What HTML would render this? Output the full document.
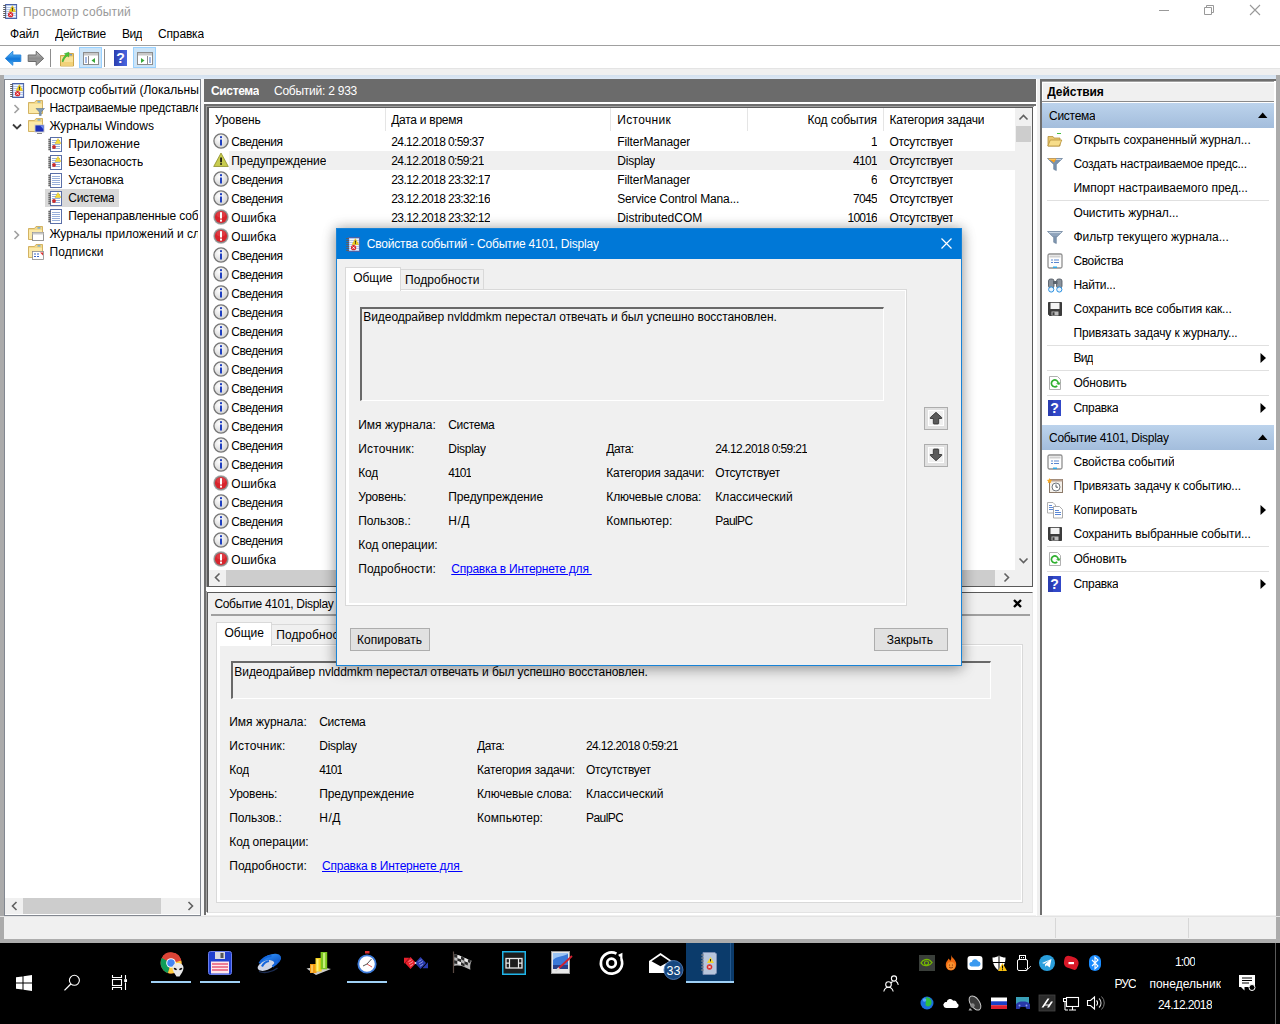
<!DOCTYPE html>
<html lang="ru"><head><meta charset="utf-8"><title>Просмотр событий</title>
<style>
html,body{margin:0;padding:0;}
body{width:1280px;height:1024px;overflow:hidden;background:#fff;font-family:"Liberation Sans",sans-serif;font-size:12px;color:#000;}
#root{position:relative;width:1280px;height:1024px;overflow:hidden;}
.a{position:absolute;box-sizing:border-box;}
.t{white-space:nowrap;overflow:hidden;}
svg{position:absolute;overflow:visible;}

</style></head>
<body>
<div id="root">
<div class="a " style="left:0px;top:0px;width:1280px;height:943px;background:#f0f0f0;"></div>
<div class="a " style="left:0px;top:0px;width:1280px;height:45px;background:#ffffff;"></div>
<div class="a " style="left:0px;top:45px;width:1280px;height:1px;background:#a0a0a0;"></div>
<div class="a " style="left:0px;top:46px;width:1280px;height:22px;background:#ffffff;"></div>
<div class="a " style="left:0px;top:68px;width:1280px;height:1px;background:#e4e4e4;"></div>
<div class="a " style="left:0px;top:75px;width:1280px;height:4px;background:linear-gradient(#d3e0ee,#dde8f5);"></div>
<div class="a " style="left:0px;top:75px;width:4px;height:864px;background:#ababab;"></div>
<div class="a " style="left:1276px;top:75px;width:4px;height:864px;background:#ababab;"></div>
<div class="a " style="left:0px;top:916px;width:1280px;height:1px;background:#e3e3e3;"></div>
<div class="a " style="left:0px;top:939px;width:1280px;height:4px;background:#adadad;"></div>
<svg style="left:3px;top:4px" width="14.0" height="15" viewBox="0 0 14 15"><rect x="2.600" y="0.500" width="11" height="14" fill="#b4c8ea" stroke="#4a62a8" stroke-width="1"/>
<path d="M3.500 2.500h9.200M3.500 4.500h9.200M3.500 6.500h9.200M3.500 8.500h9.200M3.500 10.500h9.200M3.500 12.500h9.200" stroke="#f4f8ff" stroke-width="1"/>
<path d="M0.200 1.500h2.800M0.200 3.500h2.800M0.200 5.500h2.800M0.200 7.500h2.800M0.200 9.500h2.800M0.200 11.500h2.800M0.200 13.500h2.800" stroke="#5e5e5e" stroke-width="1"/>
<path d="M9.400 1.700l3.200 5.800h-6.400z" fill="#f7d417" stroke="#d8b000" stroke-width="0.500"/><rect x="8.900" y="3.600" width="1" height="2.200" fill="#222"/><rect x="8.900" y="6.200" width="1" height="0.900" fill="#222"/>
<circle cx="7.600" cy="10.700" r="2.600" fill="#d9262c"/><path d="M6.500 9.600l2.200 2.200M8.700 9.600l-2.200 2.200" stroke="#fff" stroke-width="0.900"/></svg>
<div class="a t" style="top:4px;height:16px;line-height:16px;left:23px;color:#999999;letter-spacing:0.165px;">Просмотр событий</div>
<svg style="left:1150px;top:0" width="130" height="22"><path d="M9 10.500h10" stroke="#999" stroke-width="1" fill="none"/><path d="M54.500 7.500h7v7h-7z M56.500 7.500v-2h7v7h-2" stroke="#999" stroke-width="1" fill="none"/><path d="M100 5l10 10M110 5l-10 10" stroke="#999" stroke-width="1.100" fill="none"/></svg>
<div class="a t" style="top:26px;height:16px;line-height:16px;left:10px;letter-spacing:-0.129px;">Файл</div>
<div class="a t" style="top:26px;height:16px;line-height:16px;left:55px;letter-spacing:-0.221px;">Действие</div>
<div class="a t" style="top:26px;height:16px;line-height:16px;left:122px;letter-spacing:-0.573px;">Вид</div>
<div class="a t" style="top:26px;height:16px;line-height:16px;left:158px;letter-spacing:-0.154px;">Справка</div>
<svg style="left:4px;top:49px" width="20" height="18"><defs><linearGradient id="gb" x1="0" y1="0" x2="0" y2="1"><stop offset="0" stop-color="#6cc8ff"/><stop offset="0.550" stop-color="#0f74d8"/><stop offset="1" stop-color="#4ab4f8"/></linearGradient></defs><path d="M1.300 9.400l7.500-7.200v3.800h8v6.500h-8v3.800z" fill="url(#gb)" stroke="#2a86dc" stroke-width="1"/></svg>
<svg style="left:27px;top:49px" width="20" height="18"><defs><linearGradient id="gg" x1="0" y1="0" x2="0" y2="1"><stop offset="0" stop-color="#c8c8c8"/><stop offset="0.5" stop-color="#8c8c8c"/><stop offset="1" stop-color="#a8a8a8"/></linearGradient></defs><path d="M16.700 9.400l-7.500-7.200v3.800h-8v6.500h8v3.800z" fill="url(#gg)" stroke="#6a6a6a" stroke-width="1"/></svg>
<div class="a " style="left:50px;top:49px;width:1px;height:18px;background:#8d8d8d;"></div>
<svg style="left:59px;top:50px" width="16" height="17"><path d="M1.500 5.500h7l1-2h5v12.500h-13z" fill="#e8c468" stroke="#c9a040" stroke-width="0.900"/><path d="M2 6.500h12v9h-12z" fill="#f8e29a"/><path d="M2 12h12v3.500h-12z" fill="#f2d27a"/><rect x="10.500" y="4.200" width="2.500" height="1.200" fill="#4a90e0"/><path d="M3 11.500c0.500-3 2-5 4-6.500l-1.600-1.200 4.600-1.600-0.300 4.800-1.500-1.100c-1.800 1.300-3.200 3-4 5.800z" fill="#48c838" stroke="#2c9a22" stroke-width="0.500"/></svg>
<div class="a " style="left:79px;top:47px;width:23px;height:21px;background:#cce4f7;border:1px solid #99d1ff;"></div>
<svg style="left:83px;top:52px" width="16" height="13"><rect x="0.5" y="0.5" width="15" height="12" fill="#fff" stroke="#8c8c8c"/><rect x="1" y="1" width="14" height="2.5" fill="#c8c8c8"/><path d="M5.5 4v8" stroke="#8c8c8c"/><path d="M2 6h2M2 8h2M2 10h2" stroke="#4a74c8" stroke-width="1"/><path d="M12 6v5l-3.5-2.5z" fill="#38a838"/></svg>
<div class="a " style="left:104px;top:49px;width:1px;height:18px;background:#8d8d8d;"></div>
<svg style="left:114px;top:50px" width="13" height="16"><defs><linearGradient id="gh" x1="0" y1="0" x2="1" y2="0"><stop offset="0" stop-color="#2a3fb0"/><stop offset="1" stop-color="#4a66e0"/></linearGradient></defs><rect x="0" y="0" width="13" height="16" fill="url(#gh)"/><text x="6.5" y="13" font-size="14" font-weight="bold" fill="#fff" text-anchor="middle" font-family="Liberation Sans, sans-serif">?</text></svg>
<div class="a " style="left:133px;top:47px;width:23px;height:21px;background:#cce4f7;border:1px solid #99d1ff;"></div>
<svg style="left:137px;top:52px" width="16" height="13"><rect x="0.5" y="0.5" width="15" height="12" fill="#fff" stroke="#8c8c8c"/><rect x="1" y="1" width="14" height="2.5" fill="#c8c8c8"/><path d="M10.5 4v8" stroke="#8c8c8c"/><path d="M12 6h2M12 8h2M12 10h2" stroke="#4a74c8" stroke-width="1"/><path d="M4 6v5l3.5-2.5z" fill="#38a838"/></svg>
<div class="a " style="left:4px;top:79px;width:197px;height:837px;background:#ffffff;border:1px solid #828790;"></div>
<svg style="left:10px;top:83px" width="14.0" height="15" viewBox="0 0 14 15"><rect x="2.600" y="0.500" width="11" height="14" fill="#b4c8ea" stroke="#4a62a8" stroke-width="1"/>
<path d="M3.500 2.500h9.200M3.500 4.500h9.200M3.500 6.500h9.200M3.500 8.500h9.200M3.500 10.500h9.200M3.500 12.500h9.200" stroke="#f4f8ff" stroke-width="1"/>
<path d="M0.200 1.500h2.800M0.200 3.500h2.800M0.200 5.500h2.800M0.200 7.500h2.800M0.200 9.500h2.800M0.200 11.500h2.800M0.200 13.500h2.800" stroke="#5e5e5e" stroke-width="1"/>
<path d="M9.400 1.700l3.200 5.800h-6.400z" fill="#f7d417" stroke="#d8b000" stroke-width="0.500"/><rect x="8.900" y="3.600" width="1" height="2.200" fill="#222"/><rect x="8.900" y="6.200" width="1" height="0.900" fill="#222"/>
<circle cx="7.600" cy="10.700" r="2.600" fill="#d9262c"/><path d="M6.500 9.600l2.200 2.200M8.700 9.600l-2.200 2.200" stroke="#fff" stroke-width="0.900"/></svg>
<div class="a t" style="top:82px;height:16px;line-height:16px;left:30.5px;width:168px;letter-spacing:0.016px;">Просмотр событий (Локальный</div>
<svg style="left:13px;top:104px" width="8" height="10"><path d="M1.5 1l4 4-4 4" stroke="#a0a0a0" stroke-width="1.6" fill="none"/></svg>
<svg style="left:28px;top:100px" width="17" height="16"><path d="M0.5 2.5h6l1.5-2h6.5v13h-14z" fill="#f3d98a" stroke="#c9a54a" stroke-width="0.8"/>
<path d="M1 4h13v9h-13z" fill="#fbe9a8"/><rect x="9.5" y="1.3" width="3" height="1.2" fill="#5aa0e0"/><path d="M8 8.5h8.5l-3.3 3.5v3.5h-1.8v-3.5z" fill="#7d97b5" stroke="#4f6a88" stroke-width="0.5"/></svg>
<div class="a t" style="top:100px;height:16px;line-height:16px;left:49.4px;width:149px;letter-spacing:-0.243px;">Настраиваемые представления</div>
<svg style="left:12px;top:123px" width="10" height="8"><path d="M1 1.5l4 4 4-4" stroke="#3c3c3c" stroke-width="1.8" fill="none"/></svg>
<svg style="left:28px;top:118px" width="17" height="17"><path d="M0.5 2.5h6l1.5-2h6.5v13h-14z" fill="#f3d98a" stroke="#c9a54a" stroke-width="0.8"/>
<path d="M1 4h13v9h-13z" fill="#fbe9a8"/><rect x="9.5" y="1.3" width="3" height="1.2" fill="#5aa0e0"/><rect x="7" y="7" width="9" height="7" fill="#1c2fb8" stroke="#c8c8c8" stroke-width="0.9"/><path d="M12 7.5h3.6v4z" fill="#6f8cf0"/><path d="M9 15.5h5" stroke="#888" stroke-width="1"/></svg>
<div class="a t" style="top:118px;height:16px;line-height:16px;left:49.4px;letter-spacing:0.011px;">Журналы Windows</div>
<svg style="left:48px;top:137px" width="14" height="15"><rect x="2.5" y="0.5" width="11" height="14" fill="#ffffff" stroke="#5a6fa8"/>
<path d="M4 3.5h8M4 5.5h8M4 7.5h8M4 9.5h8M4 11.5h8" stroke="#7d9ad0" stroke-width="0.8"/>
<path d="M1.200 1.500v12" stroke="#9a9a9a" stroke-width="1.400"/><path d="M0.500 2.500h2.500M0.500 4.500h2.500M0.500 6.500h2.500M0.500 8.500h2.500M0.500 10.500h2.500M0.500 12.500h2.500" stroke="#666" stroke-width="1"/><path d="M10 1.5l3 5h-6z" fill="#f4dc3a" stroke="#d0a800" stroke-width="0.4"/><circle cx="6" cy="10" r="1.9" fill="#cc2b2b"/></svg>
<div class="a t" style="top:136px;height:16px;line-height:16px;left:68.3px;letter-spacing:0.131px;">Приложение</div>
<svg style="left:48px;top:155px" width="14" height="15"><rect x="2.5" y="0.5" width="11" height="14" fill="#ffffff" stroke="#5a6fa8"/>
<path d="M4 3.5h8M4 5.5h8M4 7.5h8M4 9.5h8M4 11.5h8" stroke="#7d9ad0" stroke-width="0.8"/>
<path d="M1.200 1.500v12" stroke="#9a9a9a" stroke-width="1.400"/><path d="M0.500 2.500h2.500M0.500 4.500h2.500M0.500 6.500h2.500M0.500 8.500h2.500M0.500 10.500h2.500M0.500 12.500h2.500" stroke="#666" stroke-width="1"/><path d="M10 1.5l3 5h-6z" fill="#f4dc3a" stroke="#d0a800" stroke-width="0.4"/><circle cx="6" cy="10" r="1.9" fill="#cc2b2b"/></svg>
<div class="a t" style="top:154px;height:16px;line-height:16px;left:68.3px;letter-spacing:-0.154px;">Безопасность</div>
<svg style="left:48px;top:173px" width="14" height="15"><rect x="2.5" y="0.5" width="11" height="14" fill="#ffffff" stroke="#5a6fa8"/>
<path d="M4 3.5h8M4 5.5h8M4 7.5h8M4 9.5h8M4 11.5h8" stroke="#7d9ad0" stroke-width="0.8"/>
<path d="M1.200 1.500v12" stroke="#9a9a9a" stroke-width="1.400"/><path d="M0.500 2.500h2.500M0.500 4.500h2.500M0.500 6.500h2.500M0.500 8.500h2.500M0.500 10.500h2.500M0.500 12.500h2.500" stroke="#666" stroke-width="1"/></svg>
<div class="a t" style="top:172px;height:16px;line-height:16px;left:68.3px;letter-spacing:-0.158px;">Установка</div>
<div class="a " style="left:45px;top:189px;width:74px;height:18px;background:#d9d9d9;"></div>
<svg style="left:48px;top:191px" width="14" height="15"><rect x="2.5" y="0.5" width="11" height="14" fill="#ffffff" stroke="#5a6fa8"/>
<path d="M4 3.5h8M4 5.5h8M4 7.5h8M4 9.5h8M4 11.5h8" stroke="#7d9ad0" stroke-width="0.8"/>
<path d="M1.200 1.500v12" stroke="#9a9a9a" stroke-width="1.400"/><path d="M0.500 2.500h2.500M0.500 4.500h2.500M0.500 6.500h2.500M0.500 8.500h2.500M0.500 10.500h2.500M0.500 12.500h2.500" stroke="#666" stroke-width="1"/><path d="M10 1.5l3 5h-6z" fill="#f4dc3a" stroke="#d0a800" stroke-width="0.4"/><circle cx="6" cy="10" r="1.9" fill="#cc2b2b"/></svg>
<div class="a t" style="top:190px;height:16px;line-height:16px;left:68.3px;letter-spacing:-0.318px;">Система</div>
<svg style="left:48px;top:209px" width="14" height="15"><rect x="2.5" y="0.5" width="11" height="14" fill="#ffffff" stroke="#5a6fa8"/>
<path d="M4 3.5h8M4 5.5h8M4 7.5h8M4 9.5h8M4 11.5h8" stroke="#7d9ad0" stroke-width="0.8"/>
<path d="M1.200 1.500v12" stroke="#9a9a9a" stroke-width="1.400"/><path d="M0.500 2.500h2.500M0.500 4.500h2.500M0.500 6.500h2.500M0.500 8.500h2.500M0.500 10.500h2.500M0.500 12.500h2.500" stroke="#666" stroke-width="1"/></svg>
<div class="a t" style="top:208px;height:16px;line-height:16px;left:68.3px;width:130px;letter-spacing:-0.147px;">Перенаправленные события</div>
<svg style="left:13px;top:230px" width="8" height="10"><path d="M1.5 1l4 4-4 4" stroke="#a0a0a0" stroke-width="1.6" fill="none"/></svg>
<svg style="left:28px;top:226px" width="17" height="16"><path d="M0.5 2.5h6l1.5-2h6.5v13h-14z" fill="#f3d98a" stroke="#c9a54a" stroke-width="0.8"/>
<path d="M1 4h13v9h-13z" fill="#fbe9a8"/><rect x="9.5" y="1.3" width="3" height="1.2" fill="#5aa0e0"/><rect x="4.5" y="6.5" width="11" height="8" fill="#fff" stroke="#8a8a8a" stroke-width="0.9"/><rect x="4.5" y="6.5" width="11" height="2" fill="#c8c8c8"/></svg>
<div class="a t" style="top:226px;height:16px;line-height:16px;left:49.4px;width:149px;letter-spacing:0.013px;">Журналы приложений и служб</div>
<svg style="left:28px;top:244px" width="17" height="16"><path d="M0.5 2.5h6l1.5-2h6.5v13h-14z" fill="#f3d98a" stroke="#c9a54a" stroke-width="0.8"/>
<path d="M1 4h13v9h-13z" fill="#fbe9a8"/><rect x="9.5" y="1.3" width="3" height="1.2" fill="#5aa0e0"/><rect x="4.5" y="7.5" width="11" height="8" fill="#fff" stroke="#8a8a8a" stroke-width="0.8"/><path d="M6 10h2M9 10h2M6 12.5h2M9 12.5h2" stroke="#3a66c8" stroke-width="1.2"/><path d="M12 8.5h3v3z" fill="#e03030"/></svg>
<div class="a t" style="top:244px;height:16px;line-height:16px;left:49.4px;letter-spacing:0.125px;">Подписки</div>
<div class="a " style="left:5px;top:898px;width:195px;height:16px;background:#f0f0f0;"></div>
<div class="a " style="left:23px;top:898px;width:138px;height:16px;background:#cdcdcd;"></div>
<svg style="left:5px;top:898px" width="195" height="16"><path d="M11.500 4l-4 4 4 4" stroke="#606060" stroke-width="1.600" fill="none"/><path d="M183.500 4l4 4-4 4" stroke="#606060" stroke-width="1.600" fill="none"/></svg>
<div class="a " style="left:201px;top:79px;width:3px;height:837px;background:#f7f7f7;"></div>
<div class="a " style="left:204px;top:79px;width:832px;height:23px;background:#6b6b6b;"></div>
<div class="a " style="left:204px;top:102px;width:832px;height:2px;background:#ffffff;"></div>
<div class="a t" style="top:83px;height:16px;line-height:16px;left:211px;color:#fff;font-weight:bold;letter-spacing:-0.359px;">Система</div>
<div class="a t" style="top:83px;height:16px;line-height:16px;left:274px;color:#fff;letter-spacing:-0.246px;">Событий: 2 933</div>
<div class="a " style="left:204px;top:104px;width:832px;height:811px;background:#ffffff;border-left:2px solid #6e6e6e;border-top:2px solid #6e6e6e;"></div>
<div class="a " style="left:206px;top:106px;width:828px;height:1px;background:#a0a0a0;"></div>
<div class="a " style="left:206px;top:106px;width:1px;height:806px;background:#a0a0a0;"></div>
<div class="a " style="left:206px;top:587px;width:830px;height:4px;background:#ffffff;"></div>
<div class="a " style="left:207px;top:107px;width:826px;height:480px;background:#ffffff;border:1px solid #5a5a5a;border-left-width:2px;"></div>
<div class="a t" style="top:112px;height:16px;line-height:16px;left:215px;letter-spacing:-0.069px;">Уровень</div>
<div class="a t" style="top:112px;height:16px;line-height:16px;left:391.25px;letter-spacing:-0.264px;">Дата и время</div>
<div class="a t" style="top:112px;height:16px;line-height:16px;left:617.2px;letter-spacing:0.346px;">Источник</div>
<div class="a t" style="top:112px;height:16px;line-height:16px;left:807.4px;letter-spacing:-0.105px;">Код события</div>
<div class="a t" style="top:112px;height:16px;line-height:16px;left:889.4px;letter-spacing:-0.193px;">Категория задачи</div>
<div class="a " style="left:385px;top:108px;width:1px;height:23px;background:#e5e5e5;"></div>
<div class="a " style="left:610px;top:108px;width:1px;height:23px;background:#e5e5e5;"></div>
<div class="a " style="left:747px;top:108px;width:1px;height:23px;background:#e5e5e5;"></div>
<div class="a " style="left:883px;top:108px;width:1px;height:23px;background:#e5e5e5;"></div>
<div class="a " style="left:229px;top:151px;width:786px;height:19px;background:#f0f0f0;"></div>
<svg style="left:213px;top:133px" width="16" height="16"><defs><radialGradient id="gi" cx="0.4" cy="0.35" r="0.7"><stop offset="0" stop-color="#fff"/><stop offset="1" stop-color="#d0d0d0"/></radialGradient></defs><circle cx="8" cy="8" r="7.100" fill="url(#gi)" stroke="#767676" stroke-width="1.300"/><rect x="7" y="6.5" width="2" height="6" fill="#2040c0"/><rect x="7" y="3.2" width="2" height="2" fill="#2040c0"/></svg>
<div class="a t" style="top:134px;height:16px;line-height:16px;left:231.25px;letter-spacing:-0.447px;">Сведения</div>
<div class="a t" style="top:134px;height:16px;line-height:16px;left:391.25px;letter-spacing:-0.608px;">24.12.2018 0:59:37</div>
<div class="a t" style="top:134px;height:16px;line-height:16px;left:617.2px;letter-spacing:-0.079px;">FilterManager</div>
<div class="a t" style="top:134px;height:16px;line-height:16px;left:871px;letter-spacing:-0.688px;">1</div>
<div class="a t" style="top:134px;height:16px;line-height:16px;left:889.4px;letter-spacing:-0.301px;">Отсутствует</div>
<svg style="left:213px;top:152px" width="16" height="16"><path d="M8 1l7.3 13.5h-14.6z" fill="#c0c040" stroke="#8f9030" stroke-width="0.8"/><path d="M8 2.5l6 11.3h-12z" fill="#c8cc50"/><rect x="7.2" y="5.5" width="1.7" height="4.8" fill="#111"/><rect x="7.2" y="11.2" width="1.7" height="1.6" fill="#111"/></svg>
<div class="a t" style="top:153px;height:16px;line-height:16px;left:231.25px;letter-spacing:-0.081px;">Предупреждение</div>
<div class="a t" style="top:153px;height:16px;line-height:16px;left:391.25px;letter-spacing:-0.608px;">24.12.2018 0:59:21</div>
<div class="a t" style="top:153px;height:16px;line-height:16px;left:617.2px;letter-spacing:-0.194px;">Display</div>
<div class="a t" style="top:153px;height:16px;line-height:16px;left:853px;letter-spacing:-0.676px;">4101</div>
<div class="a t" style="top:153px;height:16px;line-height:16px;left:889.4px;letter-spacing:-0.301px;">Отсутствует</div>
<svg style="left:213px;top:171px" width="16" height="16"><defs><radialGradient id="gi" cx="0.4" cy="0.35" r="0.7"><stop offset="0" stop-color="#fff"/><stop offset="1" stop-color="#d0d0d0"/></radialGradient></defs><circle cx="8" cy="8" r="7.100" fill="url(#gi)" stroke="#767676" stroke-width="1.300"/><rect x="7" y="6.5" width="2" height="6" fill="#2040c0"/><rect x="7" y="3.2" width="2" height="2" fill="#2040c0"/></svg>
<div class="a t" style="top:172px;height:16px;line-height:16px;left:231.25px;letter-spacing:-0.447px;">Сведения</div>
<div class="a t" style="top:172px;height:16px;line-height:16px;left:391.25px;letter-spacing:-0.598px;">23.12.2018 23:32:17</div>
<div class="a t" style="top:172px;height:16px;line-height:16px;left:617.2px;letter-spacing:-0.079px;">FilterManager</div>
<div class="a t" style="top:172px;height:16px;line-height:16px;left:871px;letter-spacing:-0.688px;">6</div>
<div class="a t" style="top:172px;height:16px;line-height:16px;left:889.4px;letter-spacing:-0.301px;">Отсутствует</div>
<svg style="left:213px;top:190px" width="16" height="16"><defs><radialGradient id="gi" cx="0.4" cy="0.35" r="0.7"><stop offset="0" stop-color="#fff"/><stop offset="1" stop-color="#d0d0d0"/></radialGradient></defs><circle cx="8" cy="8" r="7.100" fill="url(#gi)" stroke="#767676" stroke-width="1.300"/><rect x="7" y="6.5" width="2" height="6" fill="#2040c0"/><rect x="7" y="3.2" width="2" height="2" fill="#2040c0"/></svg>
<div class="a t" style="top:191px;height:16px;line-height:16px;left:231.25px;letter-spacing:-0.447px;">Сведения</div>
<div class="a t" style="top:191px;height:16px;line-height:16px;left:391.25px;letter-spacing:-0.598px;">23.12.2018 23:32:16</div>
<div class="a t" style="top:191px;height:16px;line-height:16px;left:617.2px;letter-spacing:-0.147px;">Service Control Mana...</div>
<div class="a t" style="top:191px;height:16px;line-height:16px;left:853px;letter-spacing:-0.676px;">7045</div>
<div class="a t" style="top:191px;height:16px;line-height:16px;left:889.4px;letter-spacing:-0.301px;">Отсутствует</div>
<svg style="left:213px;top:209px" width="16" height="16"><circle cx="8" cy="8" r="7.700" fill="#a8a8a8"/><circle cx="8" cy="8" r="7" fill="#8a8a8a"/><circle cx="8" cy="8" r="6.100" fill="#d8242c"/><ellipse cx="8" cy="5.500" rx="4.500" ry="3" fill="#e85058" opacity="0.500"/><rect x="7" y="3.2" width="2" height="6.3" fill="#fff"/><rect x="7" y="10.6" width="2" height="2" fill="#fff"/></svg>
<div class="a t" style="top:210px;height:16px;line-height:16px;left:231.25px;letter-spacing:0.044px;">Ошибка</div>
<div class="a t" style="top:210px;height:16px;line-height:16px;left:391.25px;letter-spacing:-0.598px;">23.12.2018 23:32:12</div>
<div class="a t" style="top:210px;height:16px;line-height:16px;left:617.2px;letter-spacing:-0.026px;">DistributedCOM</div>
<div class="a t" style="top:210px;height:16px;line-height:16px;left:847.5px;letter-spacing:-0.775px;">10016</div>
<div class="a t" style="top:210px;height:16px;line-height:16px;left:889.4px;letter-spacing:-0.301px;">Отсутствует</div>
<svg style="left:213px;top:228px" width="16" height="16"><circle cx="8" cy="8" r="7.700" fill="#a8a8a8"/><circle cx="8" cy="8" r="7" fill="#8a8a8a"/><circle cx="8" cy="8" r="6.100" fill="#d8242c"/><ellipse cx="8" cy="5.500" rx="4.500" ry="3" fill="#e85058" opacity="0.500"/><rect x="7" y="3.2" width="2" height="6.3" fill="#fff"/><rect x="7" y="10.6" width="2" height="2" fill="#fff"/></svg>
<div class="a t" style="top:229px;height:16px;line-height:16px;left:231.25px;letter-spacing:0.044px;">Ошибка</div>
<svg style="left:213px;top:247px" width="16" height="16"><defs><radialGradient id="gi" cx="0.4" cy="0.35" r="0.7"><stop offset="0" stop-color="#fff"/><stop offset="1" stop-color="#d0d0d0"/></radialGradient></defs><circle cx="8" cy="8" r="7.100" fill="url(#gi)" stroke="#767676" stroke-width="1.300"/><rect x="7" y="6.5" width="2" height="6" fill="#2040c0"/><rect x="7" y="3.2" width="2" height="2" fill="#2040c0"/></svg>
<div class="a t" style="top:248px;height:16px;line-height:16px;left:231.25px;letter-spacing:-0.447px;">Сведения</div>
<svg style="left:213px;top:266px" width="16" height="16"><defs><radialGradient id="gi" cx="0.4" cy="0.35" r="0.7"><stop offset="0" stop-color="#fff"/><stop offset="1" stop-color="#d0d0d0"/></radialGradient></defs><circle cx="8" cy="8" r="7.100" fill="url(#gi)" stroke="#767676" stroke-width="1.300"/><rect x="7" y="6.5" width="2" height="6" fill="#2040c0"/><rect x="7" y="3.2" width="2" height="2" fill="#2040c0"/></svg>
<div class="a t" style="top:267px;height:16px;line-height:16px;left:231.25px;letter-spacing:-0.447px;">Сведения</div>
<svg style="left:213px;top:285px" width="16" height="16"><defs><radialGradient id="gi" cx="0.4" cy="0.35" r="0.7"><stop offset="0" stop-color="#fff"/><stop offset="1" stop-color="#d0d0d0"/></radialGradient></defs><circle cx="8" cy="8" r="7.100" fill="url(#gi)" stroke="#767676" stroke-width="1.300"/><rect x="7" y="6.5" width="2" height="6" fill="#2040c0"/><rect x="7" y="3.2" width="2" height="2" fill="#2040c0"/></svg>
<div class="a t" style="top:286px;height:16px;line-height:16px;left:231.25px;letter-spacing:-0.447px;">Сведения</div>
<svg style="left:213px;top:304px" width="16" height="16"><defs><radialGradient id="gi" cx="0.4" cy="0.35" r="0.7"><stop offset="0" stop-color="#fff"/><stop offset="1" stop-color="#d0d0d0"/></radialGradient></defs><circle cx="8" cy="8" r="7.100" fill="url(#gi)" stroke="#767676" stroke-width="1.300"/><rect x="7" y="6.5" width="2" height="6" fill="#2040c0"/><rect x="7" y="3.2" width="2" height="2" fill="#2040c0"/></svg>
<div class="a t" style="top:305px;height:16px;line-height:16px;left:231.25px;letter-spacing:-0.447px;">Сведения</div>
<svg style="left:213px;top:323px" width="16" height="16"><defs><radialGradient id="gi" cx="0.4" cy="0.35" r="0.7"><stop offset="0" stop-color="#fff"/><stop offset="1" stop-color="#d0d0d0"/></radialGradient></defs><circle cx="8" cy="8" r="7.100" fill="url(#gi)" stroke="#767676" stroke-width="1.300"/><rect x="7" y="6.5" width="2" height="6" fill="#2040c0"/><rect x="7" y="3.2" width="2" height="2" fill="#2040c0"/></svg>
<div class="a t" style="top:324px;height:16px;line-height:16px;left:231.25px;letter-spacing:-0.447px;">Сведения</div>
<svg style="left:213px;top:342px" width="16" height="16"><defs><radialGradient id="gi" cx="0.4" cy="0.35" r="0.7"><stop offset="0" stop-color="#fff"/><stop offset="1" stop-color="#d0d0d0"/></radialGradient></defs><circle cx="8" cy="8" r="7.100" fill="url(#gi)" stroke="#767676" stroke-width="1.300"/><rect x="7" y="6.5" width="2" height="6" fill="#2040c0"/><rect x="7" y="3.2" width="2" height="2" fill="#2040c0"/></svg>
<div class="a t" style="top:343px;height:16px;line-height:16px;left:231.25px;letter-spacing:-0.447px;">Сведения</div>
<svg style="left:213px;top:361px" width="16" height="16"><defs><radialGradient id="gi" cx="0.4" cy="0.35" r="0.7"><stop offset="0" stop-color="#fff"/><stop offset="1" stop-color="#d0d0d0"/></radialGradient></defs><circle cx="8" cy="8" r="7.100" fill="url(#gi)" stroke="#767676" stroke-width="1.300"/><rect x="7" y="6.5" width="2" height="6" fill="#2040c0"/><rect x="7" y="3.2" width="2" height="2" fill="#2040c0"/></svg>
<div class="a t" style="top:362px;height:16px;line-height:16px;left:231.25px;letter-spacing:-0.447px;">Сведения</div>
<svg style="left:213px;top:380px" width="16" height="16"><defs><radialGradient id="gi" cx="0.4" cy="0.35" r="0.7"><stop offset="0" stop-color="#fff"/><stop offset="1" stop-color="#d0d0d0"/></radialGradient></defs><circle cx="8" cy="8" r="7.100" fill="url(#gi)" stroke="#767676" stroke-width="1.300"/><rect x="7" y="6.5" width="2" height="6" fill="#2040c0"/><rect x="7" y="3.2" width="2" height="2" fill="#2040c0"/></svg>
<div class="a t" style="top:381px;height:16px;line-height:16px;left:231.25px;letter-spacing:-0.447px;">Сведения</div>
<svg style="left:213px;top:399px" width="16" height="16"><defs><radialGradient id="gi" cx="0.4" cy="0.35" r="0.7"><stop offset="0" stop-color="#fff"/><stop offset="1" stop-color="#d0d0d0"/></radialGradient></defs><circle cx="8" cy="8" r="7.100" fill="url(#gi)" stroke="#767676" stroke-width="1.300"/><rect x="7" y="6.5" width="2" height="6" fill="#2040c0"/><rect x="7" y="3.2" width="2" height="2" fill="#2040c0"/></svg>
<div class="a t" style="top:400px;height:16px;line-height:16px;left:231.25px;letter-spacing:-0.447px;">Сведения</div>
<svg style="left:213px;top:418px" width="16" height="16"><defs><radialGradient id="gi" cx="0.4" cy="0.35" r="0.7"><stop offset="0" stop-color="#fff"/><stop offset="1" stop-color="#d0d0d0"/></radialGradient></defs><circle cx="8" cy="8" r="7.100" fill="url(#gi)" stroke="#767676" stroke-width="1.300"/><rect x="7" y="6.5" width="2" height="6" fill="#2040c0"/><rect x="7" y="3.2" width="2" height="2" fill="#2040c0"/></svg>
<div class="a t" style="top:419px;height:16px;line-height:16px;left:231.25px;letter-spacing:-0.447px;">Сведения</div>
<svg style="left:213px;top:437px" width="16" height="16"><defs><radialGradient id="gi" cx="0.4" cy="0.35" r="0.7"><stop offset="0" stop-color="#fff"/><stop offset="1" stop-color="#d0d0d0"/></radialGradient></defs><circle cx="8" cy="8" r="7.100" fill="url(#gi)" stroke="#767676" stroke-width="1.300"/><rect x="7" y="6.5" width="2" height="6" fill="#2040c0"/><rect x="7" y="3.2" width="2" height="2" fill="#2040c0"/></svg>
<div class="a t" style="top:438px;height:16px;line-height:16px;left:231.25px;letter-spacing:-0.447px;">Сведения</div>
<svg style="left:213px;top:456px" width="16" height="16"><defs><radialGradient id="gi" cx="0.4" cy="0.35" r="0.7"><stop offset="0" stop-color="#fff"/><stop offset="1" stop-color="#d0d0d0"/></radialGradient></defs><circle cx="8" cy="8" r="7.100" fill="url(#gi)" stroke="#767676" stroke-width="1.300"/><rect x="7" y="6.5" width="2" height="6" fill="#2040c0"/><rect x="7" y="3.2" width="2" height="2" fill="#2040c0"/></svg>
<div class="a t" style="top:457px;height:16px;line-height:16px;left:231.25px;letter-spacing:-0.447px;">Сведения</div>
<svg style="left:213px;top:475px" width="16" height="16"><circle cx="8" cy="8" r="7.700" fill="#a8a8a8"/><circle cx="8" cy="8" r="7" fill="#8a8a8a"/><circle cx="8" cy="8" r="6.100" fill="#d8242c"/><ellipse cx="8" cy="5.500" rx="4.500" ry="3" fill="#e85058" opacity="0.500"/><rect x="7" y="3.2" width="2" height="6.3" fill="#fff"/><rect x="7" y="10.6" width="2" height="2" fill="#fff"/></svg>
<div class="a t" style="top:476px;height:16px;line-height:16px;left:231.25px;letter-spacing:0.044px;">Ошибка</div>
<svg style="left:213px;top:494px" width="16" height="16"><defs><radialGradient id="gi" cx="0.4" cy="0.35" r="0.7"><stop offset="0" stop-color="#fff"/><stop offset="1" stop-color="#d0d0d0"/></radialGradient></defs><circle cx="8" cy="8" r="7.100" fill="url(#gi)" stroke="#767676" stroke-width="1.300"/><rect x="7" y="6.5" width="2" height="6" fill="#2040c0"/><rect x="7" y="3.2" width="2" height="2" fill="#2040c0"/></svg>
<div class="a t" style="top:495px;height:16px;line-height:16px;left:231.25px;letter-spacing:-0.447px;">Сведения</div>
<svg style="left:213px;top:513px" width="16" height="16"><defs><radialGradient id="gi" cx="0.4" cy="0.35" r="0.7"><stop offset="0" stop-color="#fff"/><stop offset="1" stop-color="#d0d0d0"/></radialGradient></defs><circle cx="8" cy="8" r="7.100" fill="url(#gi)" stroke="#767676" stroke-width="1.300"/><rect x="7" y="6.5" width="2" height="6" fill="#2040c0"/><rect x="7" y="3.2" width="2" height="2" fill="#2040c0"/></svg>
<div class="a t" style="top:514px;height:16px;line-height:16px;left:231.25px;letter-spacing:-0.447px;">Сведения</div>
<svg style="left:213px;top:532px" width="16" height="16"><defs><radialGradient id="gi" cx="0.4" cy="0.35" r="0.7"><stop offset="0" stop-color="#fff"/><stop offset="1" stop-color="#d0d0d0"/></radialGradient></defs><circle cx="8" cy="8" r="7.100" fill="url(#gi)" stroke="#767676" stroke-width="1.300"/><rect x="7" y="6.5" width="2" height="6" fill="#2040c0"/><rect x="7" y="3.2" width="2" height="2" fill="#2040c0"/></svg>
<div class="a t" style="top:533px;height:16px;line-height:16px;left:231.25px;letter-spacing:-0.447px;">Сведения</div>
<svg style="left:213px;top:551px" width="16" height="16"><circle cx="8" cy="8" r="7.700" fill="#a8a8a8"/><circle cx="8" cy="8" r="7" fill="#8a8a8a"/><circle cx="8" cy="8" r="6.100" fill="#d8242c"/><ellipse cx="8" cy="5.500" rx="4.500" ry="3" fill="#e85058" opacity="0.500"/><rect x="7" y="3.2" width="2" height="6.3" fill="#fff"/><rect x="7" y="10.6" width="2" height="2" fill="#fff"/></svg>
<div class="a t" style="top:552px;height:16px;line-height:16px;left:231.25px;letter-spacing:0.044px;">Ошибка</div>
<div class="a " style="left:1015px;top:108px;width:17px;height:462px;background:#f0f0f0;"></div>
<div class="a " style="left:1016px;top:126px;width:15px;height:16px;background:#cdcdcd;"></div>
<svg style="left:1015px;top:108px" width="17" height="462"><path d="M4.5 11.5l4-4 4 4" stroke="#606060" stroke-width="1.6" fill="none"/><path d="M4.5 450.5l4 4 4-4" stroke="#606060" stroke-width="1.6" fill="none"/></svg>
<div class="a " style="left:209px;top:570px;width:806px;height:16px;background:#f0f0f0;"></div>
<div class="a " style="left:226px;top:570px;width:769px;height:16px;background:#cdcdcd;"></div>
<svg style="left:209px;top:570px" width="806" height="16"><path d="M10.5 3.5l-4 4 4 4" stroke="#606060" stroke-width="1.6" fill="none"/><path d="M795.5 3.5l4 4-4 4" stroke="#606060" stroke-width="1.6" fill="none"/></svg>
<div class="a " style="left:1015px;top:570px;width:17px;height:16px;background:#f0f0f0;"></div>
<div class="a " style="left:207px;top:592px;width:826px;height:321px;background:#f0f0f0;border-left:1px solid #5a5a5a;border-top:1px solid #5a5a5a;border-right:1px solid #e8e8e8;border-bottom:1px solid #e3e3e3;"></div>
<div class="a t" style="top:596px;height:16px;line-height:16px;left:214.4px;letter-spacing:-0.317px;">Событие 4101, Display</div>
<div class="a " style="left:211px;top:614px;width:819px;height:2px;background:#a0a0a0;"></div>
<svg style="left:1012.5px;top:598.5px" width="9" height="9"><path d="M1 1l7 7M8 1l-7 7" stroke="#000" stroke-width="2.300" fill="none"/></svg>
<div class="a " style="left:216px;top:644px;width:807px;height:259px;background:#ffffff;border:1px solid #d9d9d9;"></div>
<div class="a " style="left:220px;top:646px;width:801px;height:254px;background:#f0f0f0;"></div>
<div class="a " style="left:271px;top:624px;width:84px;height:20px;background:#f0f0f0;border:1px solid #d9d9d9;border-bottom:none;"></div>
<div class="a " style="left:216px;top:622px;width:56px;height:24px;background:#ffffff;border:1px solid #d9d9d9;border-bottom:none;"></div>
<div class="a t" style="top:625px;height:16px;line-height:16px;left:224.4px;letter-spacing:0.026px;">Общие</div>
<div class="a t" style="top:627px;height:16px;line-height:16px;left:276.3px;letter-spacing:0.085px;">Подробности</div>
<div class="a " style="left:231px;top:661px;width:760px;height:38px;background:#f0f0f0;border:1px solid #fff;border-top:2px solid #696969;border-left:2px solid #696969;"></div>
<div class="a t" style="top:664px;height:16px;line-height:16px;left:234.3px;letter-spacing:-0.052px;">Видеодрайвер nvlddmkm перестал отвечать и был успешно восстановлен.</div>
<div class="a t" style="top:714px;height:16px;line-height:16px;left:229.25px;letter-spacing:-0.018px;">Имя журнала:</div>
<div class="a t" style="top:714px;height:16px;line-height:16px;left:319.25px;letter-spacing:-0.297px;">Система</div>
<div class="a t" style="top:738px;height:16px;line-height:16px;left:229.25px;letter-spacing:0.188px;">Источник:</div>
<div class="a t" style="top:738px;height:16px;line-height:16px;left:319.25px;letter-spacing:-0.266px;">Display</div>
<div class="a t" style="top:762px;height:16px;line-height:16px;left:229.25px;letter-spacing:-0.219px;">Код</div>
<div class="a t" style="top:762px;height:16px;line-height:16px;left:319.25px;letter-spacing:-0.926px;">4101</div>
<div class="a t" style="top:786px;height:16px;line-height:16px;left:229.25px;letter-spacing:-0.195px;">Уровень:</div>
<div class="a t" style="top:786px;height:16px;line-height:16px;left:319.25px;letter-spacing:-0.099px;">Предупреждение</div>
<div class="a t" style="top:810px;height:16px;line-height:16px;left:229.25px;letter-spacing:-0.097px;">Пользов.:</div>
<div class="a t" style="top:810px;height:16px;line-height:16px;left:319.25px;letter-spacing:0.536px;">Н/Д</div>
<div class="a t" style="top:834px;height:16px;line-height:16px;left:229.25px;letter-spacing:-0.100px;">Код операции:</div>
<div class="a t" style="top:858px;height:16px;line-height:16px;left:229.25px;letter-spacing:0.034px;">Подробности:</div>
<div class="a t" style="top:738px;height:16px;line-height:16px;left:477px;letter-spacing:-0.501px;">Дата:</div>
<div class="a t" style="top:738px;height:16px;line-height:16px;left:586px;letter-spacing:-0.635px;">24.12.2018 0:59:21</div>
<div class="a t" style="top:762px;height:16px;line-height:16px;left:477px;letter-spacing:-0.195px;">Категория задачи:</div>
<div class="a t" style="top:762px;height:16px;line-height:16px;left:586px;letter-spacing:-0.237px;">Отсутствует</div>
<div class="a t" style="top:786px;height:16px;line-height:16px;left:477px;letter-spacing:-0.116px;">Ключевые слова:</div>
<div class="a t" style="top:786px;height:16px;line-height:16px;left:586px;letter-spacing:0.046px;">Классический</div>
<div class="a t" style="top:810px;height:16px;line-height:16px;left:477px;letter-spacing:0.055px;">Компьютер:</div>
<div class="a t" style="top:810px;height:16px;line-height:16px;left:586px;letter-spacing:-0.548px;">PaulPC</div>
<div class="a t" style="top:858px;height:16px;line-height:16px;left:322px;color:#0000ff;letter-spacing:-0.237px;text-decoration:underline;white-space:pre;">Справка в Интернете для </div>
<div class="a " style="left:1036px;top:79px;width:1px;height:837px;background:#ffffff;"></div>
<div class="a " style="left:1040px;top:79px;width:236px;height:836px;background:#ffffff;border-left:2px solid #6e6e6e;border-top:2px solid #6e6e6e;"></div>
<div class="a " style="left:1042px;top:81px;width:232px;height:1px;background:#a0a0a0;"></div>
<div class="a " style="left:1043px;top:83px;width:231px;height:18px;background:#f0f0f0;"></div>
<div class="a " style="left:1042px;top:101px;width:232px;height:1px;background:#8a8a8a;"></div>
<div class="a t" style="top:84px;height:16px;line-height:16px;left:1047.2px;font-weight:bold;letter-spacing:-0.058px;">Действия</div>
<div class="a " style="left:1042px;top:103px;width:232px;height:25px;background:linear-gradient(#bcd3ec,#a3bddc);"></div>
<div class="a t" style="top:108px;height:16px;line-height:16px;left:1049px;letter-spacing:-0.275px;">Система</div>
<svg style="left:1258px;top:112px" width="10" height="6"><path d="M0 6h9.4l-4.700-5.500z" fill="#000"/></svg>
<div class="a t" style="top:132px;height:16px;line-height:16px;left:1073.4px;letter-spacing:-0.049px;">Открыть сохраненный журнал...</div>
<svg style="left:1047px;top:132px" width="16" height="16"><path d="M1 4.5h5l1 1.5h6v8h-12z" fill="#e8c770" stroke="#b8923a" stroke-width="0.8"/><path d="M0.8 14l2.5-6h11.5l-2.5 6z" fill="#f7dd8a" stroke="#b8923a" stroke-width="0.8"/><path d="M10 1.5h4" stroke="#40c040" stroke-width="1"/></svg>
<div class="a t" style="top:156px;height:16px;line-height:16px;left:1073.4px;letter-spacing:-0.250px;">Создать настраиваемое предс...</div>
<svg style="left:1047px;top:156px" width="16" height="16"><path d="M0.500 2.500h15l-6.200 6v6l-2.600-1.200v-4.800z" fill="#7b93ae" stroke="#5a7391" stroke-width="0.600"/><path d="M1.500 3h13l-1 1h-11z" fill="#c3d0df"/><path d="M1 2.500h8.500l-2.500 4.200-1.500-1.200z" fill="#f9a11b"/><path d="M1.500 3h7l-0.500 1h-5.500z" fill="#fcc35a"/></svg>
<div class="a t" style="top:180px;height:16px;line-height:16px;left:1073.4px;letter-spacing:-0.033px;">Импорт настраиваемого пред...</div>
<div class="a " style="left:1047px;top:200px;width:222px;height:1px;background:#e0e0e0;"></div>
<div class="a t" style="top:205px;height:16px;line-height:16px;left:1073.4px;letter-spacing:-0.088px;">Очистить журнал...</div>
<div class="a t" style="top:229px;height:16px;line-height:16px;left:1073.4px;letter-spacing:0.005px;">Фильтр текущего журнала...</div>
<svg style="left:1047px;top:229px" width="16" height="16"><path d="M0.500 2.500h15l-6.200 6v6l-2.600-1.200v-4.800z" fill="#8197b1" stroke="#5a7391" stroke-width="0.600"/><path d="M1.500 3h13l-1.200 1.200h-10.600z" fill="#c9d6e4"/><path d="M4 5.500h8l-1 1h-6z" fill="#9fb2c8"/></svg>
<div class="a t" style="top:253px;height:16px;line-height:16px;left:1073.4px;letter-spacing:-0.338px;">Свойства</div>
<svg style="left:1047px;top:253px" width="16" height="16"><rect x="1" y="1" width="14" height="14" rx="1.500" fill="#fdfdfd" stroke="#909090" stroke-width="1.300"/><rect x="2.500" y="2.500" width="11" height="2" fill="#d0d0d0"/><path d="M4 7h2M7 7h5M4 9.5h2M7 9.5h5" stroke="#5a86d0" stroke-width="1"/><rect x="6" y="13.5" width="4" height="1.5" fill="#30a8e8"/></svg>
<div class="a t" style="top:277px;height:16px;line-height:16px;left:1073.4px;letter-spacing:-0.269px;">Найти...</div>
<svg style="left:1047px;top:277px" width="17" height="16"><rect x="1.5" y="2" width="5.5" height="9" rx="2" fill="#8a929c" stroke="#4a525c" stroke-width="0.8"/><rect x="9.5" y="2" width="5.5" height="9" rx="2" fill="#8a929c" stroke="#4a525c" stroke-width="0.8"/><rect x="6" y="4" width="4.5" height="3" fill="#5a626c"/><circle cx="4.2" cy="12.5" r="2.6" fill="#e8f4ff" stroke="#2a90e0" stroke-width="1"/><circle cx="12.3" cy="12.5" r="2.6" fill="#e8f4ff" stroke="#2a90e0" stroke-width="1"/></svg>
<div class="a t" style="top:301px;height:16px;line-height:16px;left:1073.4px;letter-spacing:-0.171px;">Сохранить все события как...</div>
<svg style="left:1047px;top:301px" width="16" height="16"><path d="M1.5 1.5h13v13h-12l-1-1z" fill="#3c3c3c" stroke="#222" stroke-width="0.8"/><rect x="3.5" y="1.8" width="9" height="6.2" fill="#f4f4f4"/><rect x="4.5" y="10.5" width="7" height="4" fill="#bdbdbd"/><rect x="5.5" y="11.3" width="2" height="2.7" fill="#3c3c3c"/></svg>
<div class="a t" style="top:325px;height:16px;line-height:16px;left:1073.4px;letter-spacing:-0.107px;">Привязать задачу к журналу...</div>
<div class="a " style="left:1047px;top:345px;width:222px;height:1px;background:#e0e0e0;"></div>
<div class="a t" style="top:350px;height:16px;line-height:16px;left:1073.4px;letter-spacing:-0.740px;">Вид</div>
<svg style="left:1260px;top:353px" width="7" height="10"><path d="M0.5 0l5.5 5-5.5 5z" fill="#000"/></svg>
<div class="a " style="left:1047px;top:370px;width:222px;height:1px;background:#e0e0e0;"></div>
<div class="a t" style="top:375px;height:16px;line-height:16px;left:1073.4px;letter-spacing:-0.130px;">Обновить</div>
<svg style="left:1047px;top:375px" width="16" height="16"><path d="M2.5 1.5h8l3 3v10h-11z" fill="#fff" stroke="#a8a8a8" stroke-width="0.9"/><path d="M11.2 8.2a3.4 3.4 0 1 0 -1 2.6" fill="none" stroke="#30b030" stroke-width="1.7"/><path d="M9 9.5h3.6v-3z" fill="#30b030" transform="rotate(20 11 9)"/></svg>
<div class="a " style="left:1047px;top:395px;width:222px;height:1px;background:#e0e0e0;"></div>
<div class="a t" style="top:400px;height:16px;line-height:16px;left:1073.4px;letter-spacing:-0.283px;">Справка</div>
<svg style="left:1048px;top:400px" width="13" height="16"><rect x="0" y="0" width="13" height="16" fill="#3148c8"/><rect x="0" y="0" width="5" height="16" fill="#2a3cb0"/><text x="6.5" y="13" font-size="14" font-weight="bold" fill="#fff" text-anchor="middle" font-family="Liberation Sans, sans-serif">?</text></svg>
<svg style="left:1260px;top:403px" width="7" height="10"><path d="M0.5 0l5.5 5-5.5 5z" fill="#000"/></svg>
<div class="a " style="left:1042px;top:425px;width:232px;height:25px;background:linear-gradient(#bcd3ec,#a3bddc);"></div>
<div class="a t" style="top:430px;height:16px;line-height:16px;left:1049px;letter-spacing:-0.289px;">Событие 4101, Display</div>
<svg style="left:1258px;top:434px" width="10" height="6"><path d="M0 6h9.4l-4.700-5.500z" fill="#000"/></svg>
<div class="a t" style="top:454px;height:16px;line-height:16px;left:1073.4px;letter-spacing:-0.134px;">Свойства событий</div>
<svg style="left:1047px;top:454px" width="16" height="16"><rect x="1" y="1" width="14" height="14" rx="1.500" fill="#fdfdfd" stroke="#909090" stroke-width="1.300"/><rect x="2.500" y="2.500" width="11" height="2" fill="#d0d0d0"/><path d="M4 7h2M7 7h5M4 9.5h2M7 9.5h5" stroke="#5a86d0" stroke-width="1"/><rect x="6" y="13.5" width="4" height="1.5" fill="#30a8e8"/></svg>
<div class="a t" style="top:478px;height:16px;line-height:16px;left:1073.4px;letter-spacing:-0.117px;">Привязать задачу к событию...</div>
<svg style="left:1047px;top:478px" width="17" height="16"><rect x="2.5" y="1.5" width="13" height="13" fill="#f4f0ea" stroke="#8c7a6a"/><rect x="2.5" y="1.5" width="13" height="2" fill="#b8a090"/><circle cx="9" cy="9" r="4" fill="#fff" stroke="#606870" stroke-width="0.9"/><path d="M9 6.5v2.7h2" stroke="#404850" stroke-width="0.9" fill="none"/><path d="M2.5 0l0.8 1.8 1.9 0.2-1.4 1.3 0.4 1.9-1.7-1-1.7 1 0.4-1.9-1.4-1.3 1.9-0.2z" fill="#f8a820"/></svg>
<div class="a t" style="top:502px;height:16px;line-height:16px;left:1073.4px;letter-spacing:-0.062px;">Копировать</div>
<svg style="left:1047px;top:502px" width="17" height="17"><path d="M0.500 0.500h5.500l2.500 2.500v8h-8z" fill="#fff" stroke="#a8a8a8" stroke-width="0.900"/><path d="M2 3.500h3M2 5.500h5M2 7.500h5" stroke="#4a7ad0" stroke-width="0.900"/><path d="M6.500 4.500h6l3 3v8.500h-9z" fill="#fff" stroke="#a0a0a0" stroke-width="0.900"/><path d="M8 8.500h4M8 10.500h6M8 12.500h6" stroke="#4a7ad0" stroke-width="0.900"/></svg>
<svg style="left:1260px;top:505px" width="7" height="10"><path d="M0.5 0l5.5 5-5.5 5z" fill="#000"/></svg>
<div class="a t" style="top:526px;height:16px;line-height:16px;left:1073.4px;letter-spacing:-0.114px;">Сохранить выбранные событи...</div>
<svg style="left:1047px;top:526px" width="16" height="16"><path d="M1.5 1.5h13v13h-12l-1-1z" fill="#3c3c3c" stroke="#222" stroke-width="0.8"/><rect x="3.5" y="1.8" width="9" height="6.2" fill="#f4f4f4"/><rect x="4.5" y="10.5" width="7" height="4" fill="#bdbdbd"/><rect x="5.5" y="11.3" width="2" height="2.7" fill="#3c3c3c"/></svg>
<div class="a " style="left:1047px;top:546px;width:222px;height:1px;background:#e0e0e0;"></div>
<div class="a t" style="top:551px;height:16px;line-height:16px;left:1073.4px;letter-spacing:-0.130px;">Обновить</div>
<svg style="left:1047px;top:551px" width="16" height="16"><path d="M2.5 1.5h8l3 3v10h-11z" fill="#fff" stroke="#a8a8a8" stroke-width="0.9"/><path d="M11.2 8.2a3.4 3.4 0 1 0 -1 2.6" fill="none" stroke="#30b030" stroke-width="1.7"/><path d="M9 9.5h3.6v-3z" fill="#30b030" transform="rotate(20 11 9)"/></svg>
<div class="a " style="left:1047px;top:571px;width:222px;height:1px;background:#e0e0e0;"></div>
<div class="a t" style="top:576px;height:16px;line-height:16px;left:1073.4px;letter-spacing:-0.283px;">Справка</div>
<svg style="left:1048px;top:576px" width="13" height="16"><rect x="0" y="0" width="13" height="16" fill="#3148c8"/><rect x="0" y="0" width="5" height="16" fill="#2a3cb0"/><text x="6.5" y="13" font-size="14" font-weight="bold" fill="#fff" text-anchor="middle" font-family="Liberation Sans, sans-serif">?</text></svg>
<svg style="left:1260px;top:579px" width="7" height="10"><path d="M0.5 0l5.5 5-5.5 5z" fill="#000"/></svg>
<div class="a " style="left:1055px;top:918px;width:1px;height:20px;background:#d7d7d7;"></div>
<div class="a " style="left:1188px;top:918px;width:1px;height:20px;background:#d7d7d7;"></div>
<div class="a " style="left:336px;top:228px;width:626px;height:438px;background:#f0f0f0;border:1px solid #1883d7;box-shadow:0 0 12px rgba(0,0,0,0.28),0 4px 14px rgba(0,0,0,0.22);"></div>
<div class="a " style="left:337px;top:229px;width:624px;height:30px;background:#0078d7;"></div>
<svg style="left:346px;top:236.5px" width="14.0" height="15" viewBox="0 0 14 15"><rect x="2.600" y="0.500" width="11" height="14" fill="#b4c8ea" stroke="#4a62a8" stroke-width="1"/>
<path d="M3.500 2.500h9.200M3.500 4.500h9.200M3.500 6.500h9.200M3.500 8.500h9.200M3.500 10.500h9.200M3.500 12.500h9.200" stroke="#f4f8ff" stroke-width="1"/>
<path d="M0.200 1.500h2.800M0.200 3.500h2.800M0.200 5.500h2.800M0.200 7.500h2.800M0.200 9.500h2.800M0.200 11.500h2.800M0.200 13.500h2.800" stroke="#5e5e5e" stroke-width="1"/>
<path d="M9.400 1.700l3.200 5.800h-6.400z" fill="#f7d417" stroke="#d8b000" stroke-width="0.500"/><rect x="8.900" y="3.600" width="1" height="2.200" fill="#222"/><rect x="8.900" y="6.200" width="1" height="0.900" fill="#222"/>
<circle cx="7.600" cy="10.700" r="2.600" fill="#d9262c"/><path d="M6.500 9.600l2.200 2.200M8.700 9.600l-2.200 2.200" stroke="#fff" stroke-width="0.900"/></svg>
<div class="a t" style="top:236px;height:16px;line-height:16px;left:366.75px;color:#fff;letter-spacing:-0.191px;">Свойства событий - Событие 4101, Display</div>
<svg style="left:941px;top:238px" width="11" height="11"><path d="M0.5 0.5l10 10M10.5 0.5l-10 10" stroke="#fff" stroke-width="1.2" fill="none"/></svg>
<div class="a " style="left:345px;top:289px;width:562px;height:317px;background:#ffffff;border:1px solid #d9d9d9;"></div>
<div class="a " style="left:349px;top:291px;width:556px;height:312px;background:#f0f0f0;"></div>
<div class="a " style="left:400px;top:269px;width:84px;height:20px;background:#f0f0f0;border:1px solid #d9d9d9;border-bottom:none;"></div>
<div class="a " style="left:345px;top:267px;width:56px;height:24px;background:#ffffff;border:1px solid #d9d9d9;border-bottom:none;"></div>
<div class="a t" style="top:270px;height:16px;line-height:16px;left:353.25px;letter-spacing:-0.044px;">Общие</div>
<div class="a t" style="top:272px;height:16px;line-height:16px;left:405px;letter-spacing:0.067px;">Подробности</div>
<div class="a " style="left:360px;top:307px;width:524px;height:94px;background:#f0f0f0;border:1px solid #fff;border-top:2px solid #696969;border-left:2px solid #696969;"></div>
<div class="a t" style="top:309px;height:16px;line-height:16px;left:363.25px;letter-spacing:-0.052px;">Видеодрайвер nvlddmkm перестал отвечать и был успешно восстановлен.</div>
<div class="a t" style="top:417px;height:16px;line-height:16px;left:358.25px;letter-spacing:-0.018px;">Имя журнала:</div>
<div class="a t" style="top:417px;height:16px;line-height:16px;left:448.25px;letter-spacing:-0.297px;">Система</div>
<div class="a t" style="top:441px;height:16px;line-height:16px;left:358.25px;letter-spacing:0.188px;">Источник:</div>
<div class="a t" style="top:441px;height:16px;line-height:16px;left:448.25px;letter-spacing:-0.266px;">Display</div>
<div class="a t" style="top:465px;height:16px;line-height:16px;left:358.25px;letter-spacing:-0.219px;">Код</div>
<div class="a t" style="top:465px;height:16px;line-height:16px;left:448.25px;letter-spacing:-0.926px;">4101</div>
<div class="a t" style="top:489px;height:16px;line-height:16px;left:358.25px;letter-spacing:-0.195px;">Уровень:</div>
<div class="a t" style="top:489px;height:16px;line-height:16px;left:448.25px;letter-spacing:-0.099px;">Предупреждение</div>
<div class="a t" style="top:513px;height:16px;line-height:16px;left:358.25px;letter-spacing:-0.097px;">Пользов.:</div>
<div class="a t" style="top:513px;height:16px;line-height:16px;left:448.25px;letter-spacing:0.536px;">Н/Д</div>
<div class="a t" style="top:537px;height:16px;line-height:16px;left:358.25px;letter-spacing:-0.100px;">Код операции:</div>
<div class="a t" style="top:561px;height:16px;line-height:16px;left:358.25px;letter-spacing:0.034px;">Подробности:</div>
<div class="a t" style="top:441px;height:16px;line-height:16px;left:606.3px;letter-spacing:-0.501px;">Дата:</div>
<div class="a t" style="top:441px;height:16px;line-height:16px;left:715.3px;letter-spacing:-0.635px;">24.12.2018 0:59:21</div>
<div class="a t" style="top:465px;height:16px;line-height:16px;left:606.3px;letter-spacing:-0.195px;">Категория задачи:</div>
<div class="a t" style="top:465px;height:16px;line-height:16px;left:715.3px;letter-spacing:-0.237px;">Отсутствует</div>
<div class="a t" style="top:489px;height:16px;line-height:16px;left:606.3px;letter-spacing:-0.116px;">Ключевые слова:</div>
<div class="a t" style="top:489px;height:16px;line-height:16px;left:715.3px;letter-spacing:0.046px;">Классический</div>
<div class="a t" style="top:513px;height:16px;line-height:16px;left:606.3px;letter-spacing:0.055px;">Компьютер:</div>
<div class="a t" style="top:513px;height:16px;line-height:16px;left:715.3px;letter-spacing:-0.548px;">PaulPC</div>
<div class="a t" style="top:561px;height:16px;line-height:16px;left:451.25px;color:#0000ff;letter-spacing:-0.237px;text-decoration:underline;white-space:pre;">Справка в Интернете для </div>
<div class="a " style="left:924px;top:407px;width:24px;height:23px;background:#e1e1e1;border:1px solid #adadad;"></div>
<div class="a " style="left:928px;top:410px;width:16px;height:16px;background:#f0f0f0;border:1px solid #fff;"></div>
<svg style="left:929px;top:411px" width="14" height="14"><path d="M7 1.300l5.700 5.200v1h-3v4.800q0 0.700-0.700 0.700h-4q-0.700 0-0.700-0.700v-4.800h-3v-1z" fill="#5a5a5a" stroke="#2a2a2a" stroke-width="0.800"/></svg>
<div class="a " style="left:924px;top:444px;width:24px;height:23px;background:#e1e1e1;border:1px solid #adadad;"></div>
<div class="a " style="left:928px;top:447px;width:16px;height:16px;background:#f0f0f0;border:1px solid #fff;"></div>
<svg style="left:929px;top:448px" width="14" height="14"><path d="M7 12.700l5.700-5.200v-1h-3v-4.800q0-0.700-0.700-0.700h-4q-0.700 0-0.700 0.700v4.800h-3v1z" fill="#5a5a5a" stroke="#2a2a2a" stroke-width="0.800"/></svg>
<div class="a " style="left:350px;top:628px;width:80px;height:23px;background:#e1e1e1;border:1px solid #adadad;"></div>
<div class="a t" style="top:632px;height:16px;line-height:16px;left:357px;letter-spacing:0.037px;">Копировать</div>
<div class="a " style="left:874px;top:628px;width:74px;height:23px;background:#e1e1e1;border:1px solid #adadad;"></div>
<div class="a t" style="top:632px;height:16px;line-height:16px;left:886.8px;letter-spacing:0.012px;">Закрыть</div>
<div class="a " style="left:0px;top:940px;width:1280px;height:3px;background:#adadad;"></div>
<div class="a " style="left:0px;top:943px;width:1280px;height:81px;background:#000000;"></div>
<svg style="left:16px;top:975px" width="16" height="16"><path d="M0 2.3l6.5-0.9v6.1h-6.5z M7.5 1.3l8.5-1.3v7.5h-8.5z M0 8.5h6.5v6.1l-6.5-0.9z M7.5 8.5h8.5v7.5l-8.5-1.3z" fill="#fff"/></svg>
<svg style="left:63px;top:973px" width="20" height="20"><circle cx="11.4" cy="7.3" r="5" fill="none" stroke="#fff" stroke-width="1.1"/><path d="M7.8 11l-6.3 6.4" stroke="#fff" stroke-width="1.3"/></svg>
<svg style="left:111px;top:974px" width="18" height="18"><path d="M1.5 1v2.5h9v-2.5M1.5 16v-2.5h9v2.5" stroke="#fff" stroke-width="1.1" fill="none"/><rect x="1.5" y="5.5" width="9" height="6" fill="none" stroke="#fff" stroke-width="1.1"/><path d="M14.5 1v4M14.5 8.5v7.5" stroke="#fff" stroke-width="1.1"/><rect x="13.2" y="5.2" width="2.8" height="2.8" fill="#fff"/></svg>
<div class="a " style="left:151px;top:981px;width:40px;height:2px;background:#9fd0f5;"></div>
<div class="a " style="left:200px;top:981px;width:40px;height:2px;background:#9fd0f5;"></div>
<div class="a " style="left:347px;top:981px;width:40px;height:2px;background:#9fd0f5;"></div>
<svg style="left:159.5px;top:952px" width="26" height="26"><circle cx="11" cy="11" r="10.5" fill="#db4437"/><path d="M11 11L1.9 5.8A10.5 10.5 0 0 0 8 21z" fill="#0f9d58"/><path d="M11 11l-3 10A10.5 10.5 0 0 0 21.3 8.5z" fill="#ffcd40"/><path d="M11 11L21.3 8.5A10.5 10.5 0 0 0 1.9 5.8z" fill="#db4437"/><circle cx="11" cy="11" r="4.8" fill="#fff"/><circle cx="11" cy="11" r="3.8" fill="#4285f4"/><path d="M18 11c3.5 0 5.5 2.2 5.5 5 0 3-2.5 6-4 8.5h-3c-1.5-2.5-4-5.5-4-8.5 0-2.8 2-5 5.500-5z" fill="#e8e8e8"/><ellipse cx="15.300" cy="17" rx="1.700" ry="1" fill="#111" transform="rotate(30 15.300 17)"/><ellipse cx="20.700" cy="17" rx="1.700" ry="1" fill="#111" transform="rotate(-30 20.700 17)"/></svg>
<svg style="left:208px;top:951px" width="24" height="24"><rect x="0.500" y="0.500" width="23" height="23" rx="2" fill="#1f3fd0" stroke="#6a7de8"/><rect x="7" y="1" width="10" height="7" fill="#d8d8e0"/><rect x="12.500" y="2" width="3" height="5" fill="#555"/><rect x="3" y="10.500" width="18" height="12" fill="#ffe8ec"/><path d="M4 13h16M4 16h16M4 19h16" stroke="#e85a78" stroke-width="1.600"/></svg>
<svg style="left:256px;top:951px" width="27" height="26"><defs><linearGradient id="gsw" x1="0" y1="0" x2="0" y2="1"><stop offset="0" stop-color="#2a8af4"/><stop offset="1" stop-color="#0c4fc0"/></linearGradient></defs><ellipse cx="14.500" cy="10" rx="11.300" ry="6.300" fill="url(#gsw)" transform="rotate(-24 14.500 10)"/><ellipse cx="10" cy="14.500" rx="8.800" ry="4.600" fill="#cfd6e6" transform="rotate(-22 10 14.500)"/><path d="M3.500 12.500c2.500-4.500 7-7.500 12-7.500M6 15.500c1.500-3 4-5 7-5.500M16.500 15.500c2-1.500 4-3.500 5-6" stroke="#1566dc" stroke-width="2.200" fill="none"/><path d="M3 20.500c5 2 13 1 18.500-3.500" stroke="#1b2c52" stroke-width="1.300" fill="none"/></svg>
<svg style="left:306px;top:950px" width="26" height="26"><path d="M0.500 18.500l12-2 12.500 2.500-15 6z" fill="#cdcdcd"/><rect x="4" y="14" width="6.500" height="9" fill="#f39a14"/><rect x="5" y="15" width="2" height="7.500" fill="#fbc45a"/><rect x="9.500" y="8" width="6.200" height="13.500" fill="#f6d21e"/><rect x="10.500" y="9" width="2" height="12" fill="#fdf07a"/><rect x="14.600" y="2" width="6.600" height="17.300" fill="#7cc520"/><rect x="17" y="3" width="2.200" height="15" fill="#c4ee7a"/></svg>
<svg style="left:356px;top:951px" width="22" height="24"><rect x="9" y="0" width="4.500" height="2.500" fill="#d83030"/><circle cx="11" cy="13" r="8.700" fill="#fff" stroke="#3c7ad8" stroke-width="1.800"/><path d="M11 13l4.500-5M11 13l-4 2" stroke="#555" stroke-width="1"/><path d="M11 13l5 3" stroke="#d83030" stroke-width="0.800"/></svg>
<svg style="left:404px;top:956px" width="25" height="14"><path d="M6.500 1l5.500 6-5.500 6-5.500-6z" fill="#e8202c"/><path d="M0 1.800h5.500l-5.500 6z" fill="#e8202c"/><path d="M16.500 1l5.500 6-5.500 6-5.500-6z" fill="#2a3cb0"/><path d="M24 12.200h-5.500l5.500-6z" fill="#2a3cb0"/><path d="M4.500 5.500l3-1.800M5 8l4-2.500M6 10.200l3-1.800" stroke="#f6a0a6" stroke-width="0.900"/><path d="M14.500 5.500l3-1.800M15 8l4-2.500M16 10.200l3-1.800" stroke="#9aa4e4" stroke-width="0.900"/><circle cx="11.500" cy="7" r="0.900" fill="#ddd"/></svg>
<svg style="left:452px;top:951px" width="22" height="24"><path d="M1.500 0.500v21.500" stroke="#5a4a44" stroke-width="1.200"/><path d="M2.200 3c5 1 10 3.500 13 5l4.500 1.800c-1.500 2.500-1.800 5.500-1.300 9l-5-2.300c-3-1.500-7-2.500-11.200-1.500z" fill="#b9b9b9"/><path d="M2.200 3l3.300 1v3l-3.300-0.800zM5.500 7l3.500 1.300v3l-3.500-1.200zM9 5.300l3.500 1.600v3l-3.500-1.600zM12.500 9.900l3.500 1.600-0.300 3-3.200-1.600zM2.200 9.200l3.300 0.800v3l-3.300-0.500zM9 11.300l3.500 1.600v2.600l-3.500-1.600zM15.800 8.200l3.200 1.400-1 2.500-2.200-1z" fill="#2a2a2a"/><path d="M5.500 4l3.500 1.300v2.700l-3.500-1zM12.500 6.900l3.300 1.300v3.300l-3.300-1.600zM5.500 10.100l3.500 1.200v2.500l-3.500-0.800z" fill="#ececec"/></svg>
<svg style="left:502px;top:951px" width="24" height="24"><rect x="0.750" y="0.750" width="22.500" height="22.500" fill="#1c1c1c" stroke="#1fb4e8" stroke-width="1.500"/><rect x="4" y="7.500" width="16" height="9.500" fill="none" stroke="#e8e8e8" stroke-width="1.300"/><path d="M7.500 7.500v9.500M16.500 7.500v9.500M4 12.200h3.500M16.500 12.200h3.500" stroke="#e8e8e8" stroke-width="1.200"/></svg>
<svg style="left:551px;top:951px" width="22" height="24"><rect x="0.500" y="0.500" width="18" height="22" fill="#e8e8e8" stroke="#9a9a9a"/><rect x="2" y="2" width="15" height="12" fill="#3a78d8"/><path d="M2 9c4-4 8-3 15-6v-1h-15z" fill="#9cc4f4"/><rect x="2" y="14" width="15" height="4" fill="#27408a"/><path d="M21 5l-14 13" stroke="#d02030" stroke-width="1.800"/><path d="M8 17l-3.500 3.500" stroke="#ddd" stroke-width="2"/></svg>
<svg style="left:599px;top:950px" width="26" height="26"><path d="M17.48 3.64A10.6 10.6 0 1 0 22.33 9.03" fill="none" stroke="#fff" stroke-width="2.700"/><path d="M22.33 9.33v-4.800l-2.600 1.300" fill="none" stroke="#fff" stroke-width="2.200"/><circle cx="12.500" cy="13" r="4.300" fill="none" stroke="#fff" stroke-width="2.700"/></svg>
<svg style="left:648px;top:952px" width="36" height="30"><path d="M1 9l11.500-8 11.500 8v12h-23z" fill="#fff"/><path d="M3.500 9.300l9 5 9-5-9-6z" fill="#000"/><circle cx="25.500" cy="18" r="9.500" fill="#17477f" stroke="#4f7cb8" stroke-width="0.900"/><text x="25.500" y="22.500" font-size="12.500" fill="#fff" text-anchor="middle" font-family="Liberation Sans, sans-serif">33</text></svg>
<div class="a " style="left:686px;top:943px;width:48px;height:38px;background:#0b3b6b;"></div>
<div class="a " style="left:730px;top:943px;width:1px;height:38px;background:#24598f;"></div>
<div class="a " style="left:686px;top:981px;width:48px;height:2px;background:#9fd0f5;"></div>
<svg style="left:700px;top:951px" width="17" height="24"><path d="M3 1.500h12l1.500 1.500v19l-1.500 1.500h-12z" fill="#b8c6dc" stroke="#7a8cb0"/><path d="M1 4h3M1 7h3M1 10h3M1 13h3M1 16h3M1 19h3" stroke="#888" stroke-width="1.200"/><path d="M10.500 6l3.500 6h-7z" fill="#f2d42c"/><rect x="10" y="8" width="1" height="2.400" fill="#222"/><circle cx="9.500" cy="16" r="2.800" fill="#d9302c"/><path d="M8.300 14.800l2.400 2.400M10.700 14.800l-2.400 2.400" stroke="#fff" stroke-width="0.900"/></svg>
<svg style="left:883px;top:975px" width="16" height="17"><circle cx="5.500" cy="9.500" r="2.800" fill="none" stroke="#fff" stroke-width="1.100"/><path d="M0.800 16.500c0.600-3 2.500-4.300 4.700-4.300s4 1.300 4.700 4.300" fill="none" stroke="#fff" stroke-width="1.100"/><circle cx="11" cy="3.500" r="2.600" fill="none" stroke="#fff" stroke-width="1.100"/><path d="M9.500 6.500l-1.500 1.500M13 6.300c1.300 0.800 2 2 2.300 3.500" fill="none" stroke="#fff" stroke-width="1.100"/></svg>
<svg style="left:919px;top:955px" width="16" height="16"><rect x="0" y="0" width="16" height="16" fill="#3a3f3a"/><path d="M2 8c2-3.500 6-4.500 9-2.500l2 2c-2 3-6 4-9 2.500z" fill="none" stroke="#76b900" stroke-width="1.300"/><circle cx="7.500" cy="8" r="2" fill="none" stroke="#76b900" stroke-width="1.100"/></svg>
<svg style="left:943px;top:955px" width="16" height="16"><path d="M8 0c1 3 4 4 5 7.500 1 4-1.500 8-5 8s-6-3.500-5-7.500c0.500-2 2-2.500 2.500-4.500 1 1 1.500 1.500 1.500 2.500 1.500-1.500 1.500-4 1-6z" fill="#f06a10"/><circle cx="8" cy="11" r="4" fill="#f79030"/><path d="M6 12c1 1.300 3 1.300 4 0" stroke="#7a2a00" stroke-width="0.800" fill="none"/><circle cx="6.500" cy="10" r="0.600" fill="#7a2a00"/><circle cx="9.500" cy="10" r="0.600" fill="#7a2a00"/></svg>
<svg style="left:967px;top:955px" width="16" height="16"><rect x="0.500" y="1" width="15" height="14" rx="3" fill="#fff"/><path d="M4.500 11.500a2.300 2.300 0 0 1 0.300-4.600 3.300 3.300 0 0 1 6.300-0.700 2.700 2.700 0 0 1 0.400 5.300z" fill="#3a9af0"/></svg>
<svg style="left:991px;top:955px" width="16" height="16"><path d="M8 0.500c2 1.500 4 2 6.500 2 0 6-2 10.500-6.500 13-4.500-2.500-6.500-7-6.500-13 2.500 0 4.500-0.500 6.500-2z" fill="#fff"/><path d="M8 0.500v15M1.700 7.500h12.600" stroke="#000" stroke-width="1"/><path d="M11.500 8l4.500 8h-9z" fill="#f8c010"/><rect x="11" y="10.500" width="1" height="3" fill="#000"/><rect x="11" y="14.200" width="1" height="1" fill="#000"/></svg>
<svg style="left:1015px;top:955px" width="16" height="16"><rect x="4.500" y="0.500" width="6" height="4" fill="none" stroke="#fff"/><rect x="2.500" y="4.500" width="10" height="11" rx="1.500" fill="none" stroke="#fff"/><rect x="6" y="2" width="1" height="1.200" fill="#fff"/><rect x="8" y="2" width="1" height="1.200" fill="#fff"/><path d="M10 13l2 2 4-4" stroke="#bbb" stroke-width="1" fill="none"/></svg>
<svg style="left:1039px;top:955px" width="16" height="16"><circle cx="8" cy="8" r="8" fill="#2a9fdc"/><path d="M3 8l9.500-4-1.700 8.500-3-2.200-1.500 1.500-0.300-2.500 4.500-4-5.500 3.500z" fill="#fff"/></svg>
<svg style="left:1063px;top:955px" width="16" height="16"><path d="M3 1.500c2-1.500 5 0 7 0.500s5 2 5.500 5-1 4.500-1.500 6-2 2.500-4 1.500-3.500-1-6-2-3.500-3.500-3-6 0.500-4 2-5z" fill="#d81828"/><rect x="5.500" y="7" width="5.500" height="2.200" fill="#fff"/></svg>
<svg style="left:1087px;top:955px" width="16" height="16"><rect x="2" y="0" width="12" height="16" rx="6" fill="#1a8cff"/><path d="M5 5l6 6-3 2.800v-11.600l3 2.800-6 6" stroke="#fff" stroke-width="1.100" fill="none"/></svg>
<svg style="left:919px;top:995px" width="16" height="16"><circle cx="8" cy="8" r="6.500" fill="#1a6fe0"/><path d="M8 2c3 1 5 3 4.500 6s-3 4-5 3 0-4-1-5 0-3 1.500-4z" fill="#30c040"/><circle cx="5.500" cy="5" r="1.800" fill="#5aa8ff"/></svg>
<svg style="left:943px;top:995px" width="16" height="16"><path d="M3.500 13a3 3 0 0 1 0.200-6 3.500 3.500 0 0 1 6.500-1.300 3 3 0 0 1 3.800 2.500 2.500 2.500 0 0 1-0.500 4.800z" fill="#fff"/><path d="M1 10.500a2.500 2.500 0 0 1 2.500-3" stroke="#fff" fill="none"/></svg>
<svg style="left:967px;top:995px" width="16" height="16"><ellipse cx="8" cy="8" rx="4.500" ry="8" fill="#3a3a3a" stroke="#c8c8c8" stroke-width="1" transform="rotate(-35 8 8)"/><circle cx="5.500" cy="10.500" r="2.200" fill="#888"/><path d="M3 13l-1.500 2.500h4z" fill="#aaa"/></svg>
<svg style="left:991px;top:995px" width="16" height="16"><rect x="0" y="2.500" width="16" height="11.500" fill="#fff"/><rect x="0" y="6.300" width="16" height="3.900" fill="#1a3fc8"/><rect x="0" y="10.200" width="16" height="3.800" fill="#e02030"/></svg>
<svg style="left:1015px;top:995px" width="16" height="16"><rect x="1" y="2" width="13" height="9" fill="#3aa0b8"/><path d="M1 9c2-2 4-2.500 7-2.500s5 0.500 7 2.500v5h-3.500l-1-2h-5l-1 2h-3.500z" fill="#2838a8"/><circle cx="4.500" cy="10.500" r="1" fill="#8aa0f0"/><circle cx="11.500" cy="10.500" r="1" fill="#8aa0f0"/></svg>
<svg style="left:1039px;top:995px" width="16" height="16"><rect x="0" y="0" width="16" height="16" fill="#2c2c2c" stroke="#444" stroke-width="0.800"/><path d="M2.500 12.500l6-9h2l-6 9zM8 12.500l4-6h2l-4 6z" fill="#fff"/><path d="M5 10h5" stroke="#fff" stroke-width="1"/></svg>
<svg style="left:1063px;top:995px" width="16" height="16"><rect x="3.500" y="2.500" width="12" height="9" fill="none" stroke="#fff" stroke-width="1.100"/><path d="M9.500 11.500v3M6 15h7" stroke="#fff" stroke-width="1.100"/><rect x="0.500" y="3.500" width="3" height="3" fill="#000" stroke="#fff" stroke-width="1"/><path d="M2 6.500v8.500h3" stroke="#fff" stroke-width="1" fill="none"/></svg>
<svg style="left:1087px;top:995px" width="16" height="16"><path d="M0.500 5.500h3l4-3.500v12l-4-3.500h-3z" fill="none" stroke="#fff" stroke-width="1.100"/><path d="M9.500 5.500a3.500 3.500 0 0 1 0 5" stroke="#fff" stroke-width="1.100" fill="none"/><path d="M12 3.500a6 6 0 0 1 0 9" stroke="#ccc" stroke-width="1.100" fill="none"/><path d="M14.500 1.500a9 9 0 0 1 0 13" stroke="#777" stroke-width="1" fill="none"/></svg>
<div class="a t" style="top:976px;height:16px;line-height:16px;left:1114.5px;color:#fff;letter-spacing:-0.977px;">РУС</div>
<div class="a t" style="top:953.5px;height:16px;line-height:16px;left:1175px;color:#fff;letter-spacing:-0.840px;">1:00</div>
<div class="a t" style="top:976px;height:16px;line-height:16px;left:1149.4px;color:#fff;letter-spacing:0.025px;">понедельник</div>
<div class="a t" style="top:997.3px;height:16px;line-height:16px;left:1158px;color:#fff;letter-spacing:-0.606px;">24.12.2018</div>
<svg style="left:1239px;top:975px" width="17" height="17"><path d="M0 0h16v12h-8l0 0h-2.500v3.500l-3.500-3.500h-2z" fill="#fff"/><path d="M3 3h10M3 5.500h10M3 8h7" stroke="#000" stroke-width="1"/><circle cx="13" cy="12.500" r="3" fill="#000" stroke="#fff" stroke-width="1"/></svg>
<div class="a " style="left:1275px;top:943px;width:1px;height:81px;background:#5a5a5a;"></div>
</div>
</body></html>
